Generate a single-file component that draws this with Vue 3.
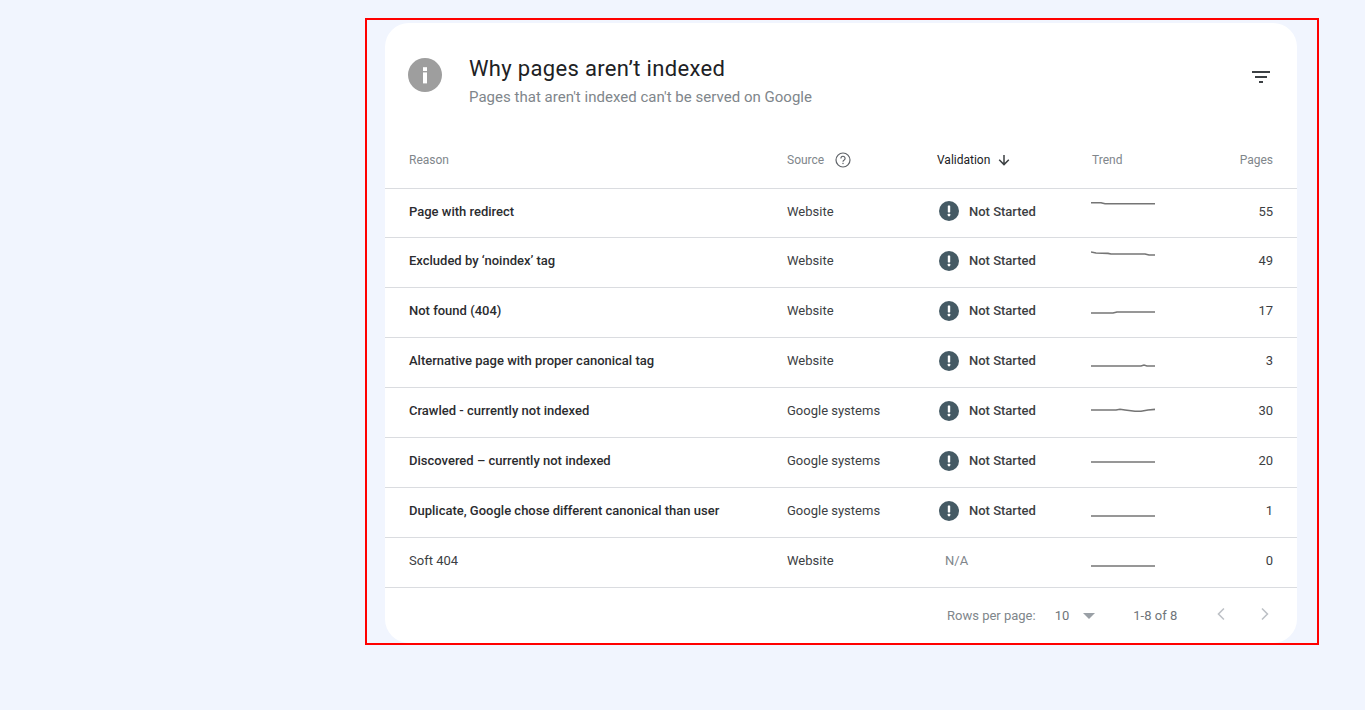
<template>
  <div class="page">
    <div class="frame">
      <section class="card">
        <header class="card-head">
          <svg class="info-icon" width="34" height="34" viewBox="0 0 34 34">
            <circle cx="17" cy="17" r="17" fill="#9e9e9e" />
            <rect x="15" y="14.4" width="4" height="11" fill="#fff" />
            <rect x="15" y="9.2" width="4" height="3.8" fill="#fff" />
          </svg>
          <div class="titles">
            <h2>Why pages aren’t indexed</h2>
            <p>Pages that aren't indexed can't be served on Google</p>
          </div>
          <svg class="filter-icon" width="18" height="12" viewBox="0 0 18 12">
            <path d="M0 0h18v2H0zM3 5h12v2H3zM7 10h4v2H7z" fill="#3c4043" />
          </svg>
        </header>

        <div class="row head-row">
          <div>Reason</div>
          <div class="source-head">
            Source
            <svg width="16" height="16" viewBox="0 0 16 16">
              <circle cx="8" cy="8" r="7" fill="none" stroke="#5f6368" stroke-width="1.2" />
              <path d="M5.9 6.4a2.1 2.1 0 1 1 3.3 1.7c-.8.5-1.2.9-1.2 1.7" fill="none" stroke="#5f6368" stroke-width="1.2" />
              <rect x="7.4" y="10.8" width="1.2" height="1.3" fill="#5f6368" />
            </svg>
          </div>
          <div class="validation-head">
            Validation
            <svg width="12" height="12" viewBox="0 0 12 12">
              <path d="M6 1v9.4M1.2 5.8 6 10.6l4.8-4.8" fill="none" stroke="#3c4043" stroke-width="1.5" />
            </svg>
          </div>
          <div>Trend</div>
          <div class="num">Pages</div>
        </div>

        <div v-for="(item, i) in items" :key="item.reason" class="row body-row" :class="{ first: i === 0 }">
          <div class="reason" :class="{ plain: !item.started }">{{ item.reason }}</div>
          <div>{{ item.source }}</div>
          <div v-if="item.started" class="status">
            <svg width="20" height="20" viewBox="0 0 20 20">
              <circle cx="10" cy="10" r="10" fill="#455a64" />
              <rect x="8.8" y="4.6" width="2.4" height="6.8" rx="0.4" fill="#fff" />
              <rect x="8.8" y="12.8" width="2.4" height="2.4" rx="0.4" fill="#fff" />
            </svg>
            <span>Not Started</span>
          </div>
          <div v-else class="na">N/A</div>
          <svg class="spark" width="64" height="32" viewBox="0 0 64 32">
            <polyline :points="item.trend" fill="none" stroke="#757575" stroke-width="1.6" />
          </svg>
          <div class="num">{{ item.pages }}</div>
        </div>

        <footer class="pager">
          <span class="rows-label">Rows per page:</span>
          <span class="rows-value">10</span>
          <span class="caret"></span>
          <span class="range">1-8 of 8</span>
          <svg class="chev" width="10" height="14" viewBox="0 0 10 14">
            <path d="M8 1.5 2.5 7 8 12.5" fill="none" stroke="#bdc1c6" stroke-width="1.6" />
          </svg>
          <svg class="chev next" width="10" height="14" viewBox="0 0 10 14">
            <path d="M2 1.5 7.5 7 2 12.5" fill="none" stroke="#bdc1c6" stroke-width="1.6" />
          </svg>
        </footer>
      </section>
    </div>
  </div>
</template>

<script setup>
const items = [
  { reason: 'Page with redirect', source: 'Website', started: true, pages: 55, trend: '0,4.8 10,4.8 14,5.8 64,5.8' },
  { reason: 'Excluded by ‘noindex’ tag', source: 'Website', started: true, pages: 49, trend: '0,5 5,6 17,6.4 20,7 54,7 58,8 64,8' },
  { reason: 'Not found (404)', source: 'Website', started: true, pages: 17, trend: '0,16 22,16 26,15 64,15' },
  { reason: 'Alternative page with proper canonical tag', source: 'Website', started: true, pages: 3, trend: '0,19 50,19 53,18 56,19 64,19' },
  { reason: 'Crawled - currently not indexed', source: 'Google systems', started: true, pages: 30, trend: '0,13 25,13 29,12.3 34,13 44,14.3 50,14.3 57,13 64,12.4' },
  { reason: 'Discovered – currently not indexed', source: 'Google systems', started: true, pages: 20, trend: '0,15 64,15' },
  { reason: 'Duplicate, Google chose different canonical than user', source: 'Google systems', started: true, pages: 1, trend: '0,19 64,19' },
  { reason: 'Soft 404', source: 'Website', started: false, pages: 0, trend: '0,19 64,19' }
]
</script>

<style>
html, body {
  margin: 0;
  background: #f1f5fe;
}
</style>

<style scoped>
.page {
  height: 710px;
  padding: 18px 0 0 365px;
  box-sizing: border-box;
  font-family: Roboto, "Liberation Sans", sans-serif;
  overflow: hidden;
}

.frame {
  width: 954px;
  height: 627px;
  box-sizing: border-box;
  border: 2px solid #f00;
  padding: 3px 20px 0 18px;
}

.card {
  height: 620px;
  background: #fff;
  border-radius: 24px;
}

.card-head {
  display: flex;
  align-items: flex-start;
  height: 113px;
  padding: 35px 27px 0 23px;
  box-sizing: border-box;
}

.info-icon {
  flex: none;
}

.titles {
  flex: 1;
  margin-left: 27px;
  margin-top: -2px;
}

.titles h2 {
  margin: 0;
  font-size: 22px;
  line-height: 26px;
  font-weight: 400;
  letter-spacing: 0.33px;
  color: #202124;
}

.titles p {
  margin: 5px 0 0;
  font-size: 15px;
  line-height: 20px;
  letter-spacing: 0.02px;
  color: #80868b;
}

.filter-icon {
  margin-top: 13px;
}

.row {
  display: grid;
  grid-template-columns: 378px 150px 155px 1fr 60px;
  align-items: center;
  padding: 0 24px;
  font-size: 13px;
  color: #3c4043;
  border-bottom: 1px solid #dadce0;
  box-sizing: border-box;
}

.head-row {
  height: 53px;
  padding-bottom: 5px;
  font-size: 12px;
  color: #80868b;
}

.source-head {
  display: flex;
  align-items: center;
  gap: 11px;
}

.validation-head {
  display: flex;
  align-items: center;
  gap: 8px;
  color: #202124;
}

.body-row {
  height: 50px;
  padding-bottom: 4px;
  grid-template-columns: 378px 150px 154px 1fr 60px;
}

.body-row.first {
  height: 49px;
}

.reason {
  font-weight: 500;
  color: #2b2c2f;
}

.reason.plain {
  font-weight: 400;
  color: #3c4043;
}

.status {
  display: flex;
  align-items: center;
  gap: 10px;
  margin-left: 2px;
  font-weight: 500;
  color: #3c4043;
}

.na {
  margin-left: 8px;
  color: #80868b;
}

.spark {
  align-self: start;
  margin-top: 9px;
}

.num {
  text-align: right;
}

.pager {
  display: flex;
  align-items: center;
  height: 55px;
  padding: 0 27px 0 562px;
  font-size: 13px;
  white-space: nowrap;
  color: #80868b;
}

.rows-value {
  margin-left: 19px;
  color: #70757a;
}

.caret {
  width: 0;
  height: 0;
  margin-left: 14px;
  border-left: 6px solid transparent;
  border-right: 6px solid transparent;
  border-top: 6px solid #9aa0a6;
}

.range {
  margin-left: 38px;
  color: #70757a;
}

.chev {
  margin-left: 39px;
  margin-top: -3px;
}

.chev.next {
  margin-left: 34px;
}
</style>
